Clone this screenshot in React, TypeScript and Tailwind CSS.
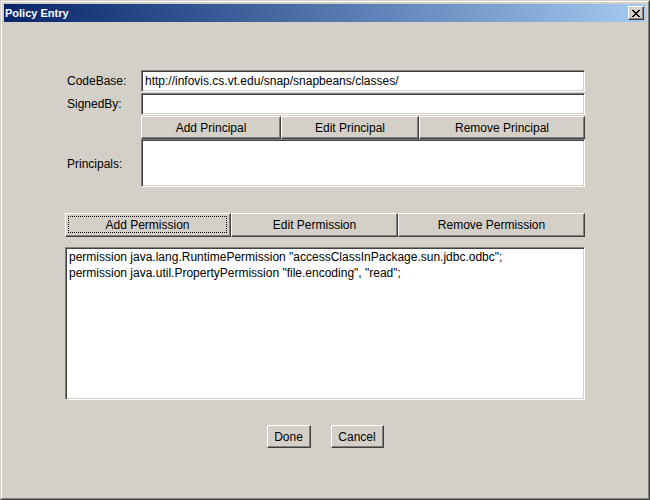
import React from "react";

const font = { fontFamily: '"Liberation Sans", Arial, sans-serif' };

function Btn({ children, className = "", focus = false }: { children: React.ReactNode; className?: string; focus?: boolean }) {
  return (
    <div
      className={
        "flex border border-t-white border-l-white border-r-[#404040] border-b-[#404040] bg-[#d4d0c8] shadow-[inset_-1px_-1px_#808080] text-[12px] text-black " +
        className
      }
    >
      {focus ? (
        <div className="flex-1 m-[2px] mb-[3px] mr-[3px] border border-dotted border-black flex items-center justify-center">
          {children}
        </div>
      ) : (
        <div className="flex-1 flex items-center justify-center">{children}</div>
      )}
    </div>
  );
}

function Sunken({ children, className = "" }: { children?: React.ReactNode; className?: string }) {
  return (
    <div
      className={
        "bg-white border border-t-[#808080] border-l-[#808080] border-r-white border-b-white shadow-[inset_1px_1px_#404040,inset_-1px_-1px_#d4d0c8] text-[12px] text-black " +
        className
      }
    >
      {children}
    </div>
  );
}

export default function App() {
  return (
    <div style={font} className="w-[650px] h-[500px] bg-[#d4d0c8]">
      <div className="w-full h-full border border-t-[#d4d0c8] border-l-[#d4d0c8] border-r-[#404040] border-b-[#404040]">
        <div className="w-full h-full border border-t-white border-l-white border-r-[#808080] border-b-[#808080] p-[2px] flex flex-col">
          {/* title bar */}
          <div className="h-[18px] flex items-center bg-gradient-to-r from-[#0a246a] to-[#a6caf0] pl-[1px] pr-[2px]">
            <span className="text-white font-bold text-[11px] flex-1" style={{ fontFamily: '"Liberation Sans", Arial, sans-serif' }}>
              Policy Entry
            </span>
            <div className="w-[16px] h-[14px] border border-t-white border-l-white border-r-[#404040] border-b-[#404040] bg-[#d4d0c8] shadow-[inset_-1px_-1px_#808080] flex items-center justify-center">
              <svg width="8" height="7" viewBox="0 0 8 7" shapeRendering="crispEdges">
                <path d="M0 0h2v1h-2zM6 0h2v1h-2zM1 1h2v1h-2zM5 1h2v1h-2zM2 2h4v1h-4zM3 3h2v1h-2zM2 4h4v1h-4zM1 5h2v1h-2zM5 5h2v1h-2zM0 6h2v1h-2zM6 6h2v1h-2z" fill="#000" />
              </svg>
            </div>
          </div>

          {/* content */}
          <div className="flex-1 flex flex-col pl-[61px] pt-[48px]">
            <div className="w-[520px] flex flex-col">
              {/* principal section */}
              <div className="grid grid-cols-[76px_444px] gap-y-[1px]">
                <div className="flex items-center pl-[2px] text-[12px] text-black">CodeBase:</div>
                <Sunken className="h-[22px] flex items-center pl-[3px]">http://infovis.cs.vt.edu/snap/snapbeans/classes/</Sunken>
                <div className="flex items-center pl-[2px] text-[12px] text-black">SignedBy:</div>
                <Sunken className="h-[22px]" />
                <div />
                <div className="flex h-[23px]">
                  <Btn className="w-[140px]">Add Principal</Btn>
                  <Btn className="w-[138px]">Edit Principal</Btn>
                  <Btn className="flex-1">Remove Principal</Btn>
                </div>
                <div className="flex items-center pl-[2px] text-[12px] text-black">Principals:</div>
                <Sunken className="h-[48px] -mt-[1px]" />
              </div>

              {/* permission buttons */}
              <div className="flex h-[24px] mt-[26px]">
                <Btn className="w-[166px]" focus>Add Permission</Btn>
                <Btn className="w-[167px]">Edit Permission</Btn>
                <Btn className="flex-1">Remove Permission</Btn>
              </div>

              <Sunken className="h-[153px] mt-[10px] pl-[3px] pt-[1px] leading-[16px]">
                <div>permission java.lang.RuntimePermission "accessClassInPackage.sun.jdbc.odbc";</div>
                <div>permission java.util.PropertyPermission "file.encoding", "read";</div>
              </Sunken>

              <div className="flex justify-center gap-[20px] mt-[25px]">
                <Btn className="w-[44px] h-[23px]">Done</Btn>
                <Btn className="w-[53px] h-[23px]">Cancel</Btn>
              </div>
            </div>
          </div>
        </div>
      </div>
    </div>
  );
}
